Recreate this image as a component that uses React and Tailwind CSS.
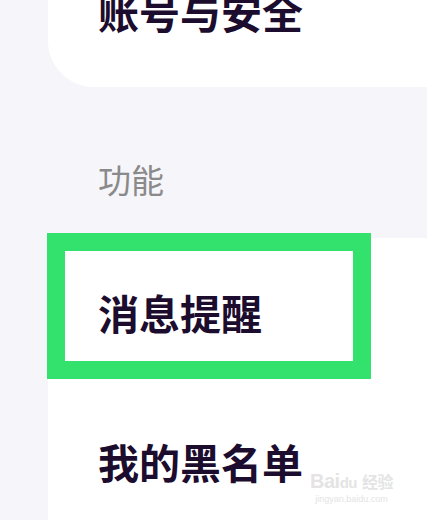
export default function App() {
  const font = { fontFamily: '"Noto Sans CJK SC", "Noto Sans", sans-serif' };
  return (
    <div className="relative w-[427px] h-[520px] overflow-hidden bg-[#f5f5fa] flex flex-col" style={font}>
      <div className="ml-[48px] h-[87px] shrink-0 bg-white rounded-bl-[46px] pl-[50px] flex flex-col">
        <div className="mt-[-9px] text-[41px] leading-[41px] font-bold text-[#1c0c2e] whitespace-nowrap">账号与安全</div>
      </div>
      <div className="h-[151px] shrink-0 pl-[98px] pt-[76px]">
        <div className="text-[33px] leading-[33px] text-[#8a8a8a]">功能</div>
      </div>
      <div className="ml-[48px] flex-1 bg-white pl-[50px] pt-[54px]">
        <div className="text-[41px] leading-[41px] font-bold text-[#1c0c2e]">消息提醒</div>
        <div className="mt-[108px] text-[41px] leading-[41px] font-bold text-[#1c0c2e]">我的黑名单</div>
      </div>
      <div className="absolute left-[47px] top-[233px] w-[324px] h-[146px] border-[18px] border-[#33e26c]" />
      <div className="absolute left-[310px] top-[470px] flex flex-col items-center text-[#e4e4e4]">
        <div className="text-[20px] leading-[22px] font-bold tracking-tight" style={{ fontFamily: '"Liberation Sans", sans-serif' }}>
          Bai<span className="text-[15px]">du</span> <span style={font} className="text-[16px]">经验</span>
        </div>
        <div className="text-[9px] leading-[10px]" style={{ fontFamily: '"Liberation Sans", sans-serif' }}>jingyan.baidu.com</div>
      </div>
    </div>
  );
}
